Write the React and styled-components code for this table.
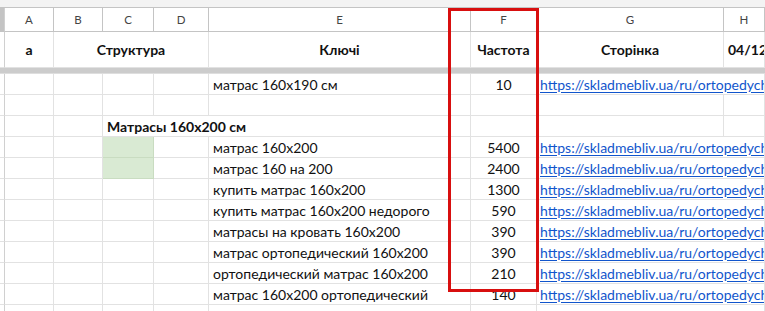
import React from 'react';
import styled, { createGlobalStyle } from 'styled-components';

const GlobalStyle = createGlobalStyle`
  html, body {
    margin: 0;
    padding: 0;
    background: #ffffff;
    overflow: hidden;
  }
  body {
    font-family: Lato, 'Noto Sans', sans-serif;
  }
`;

const COLS = '5px 49px 49px 51px 55px 262px 66px 187px 1fr';
const LINK =
  'https://skladmebliv.ua/ru/ortopedychni-matratsy/matratsy-160x200';

const Sheet = styled.div`
  position: relative;
  width: 765px;
  height: 311px;
  overflow: hidden;
  background: #ffffff;
`;

const TopStrip = styled.div`
  height: 7px;
  background: #f3f3f3;
  border-bottom: 1px solid #c4c4c4;
`;

const Row = styled.div`
  display: grid;
  grid-template-columns: ${COLS};
  height: ${({ $height }) => $height || 21}px;
`;

const Cell = styled.div`
  box-sizing: border-box;
  min-width: 0;
  display: flex;
  align-items: center;
  justify-content: ${({ $align }) =>
    $align === 'center' ? 'center' : $align === 'right' ? 'flex-end' : 'flex-start'};
  padding: 0 4px;
  grid-column: ${({ $span }) => ($span ? `span ${$span}` : 'auto')};
  border-right: 1px solid ${({ $line }) => $line || '#e2e2e2'};
  border-bottom: 1px solid ${({ $line }) => $line || '#e2e2e2'};
  background: ${({ $bg }) => $bg || 'transparent'};
  font-size: 14px;
  font-weight: ${({ $bold }) => ($bold ? 700 : 400)};
  color: #111111;
  white-space: nowrap;
  overflow: ${({ $spill }) => ($spill ? 'visible' : 'hidden')};
`;

const RowHead = styled.div`
  box-sizing: border-box;
  background: ${({ $filled }) => ($filled ? '#c4c4c4' : 'transparent')};
  border-right: 1px solid #d0d0d0;
  border-bottom: 1px solid ${({ $filled }) => ($filled ? '#c4c4c4' : '#e2e2e2')};
`;

const Letter = styled(Cell)`
  font-size: 11.5px;
  color: #444444;
  border-color: #c4c4c4;
  padding: 0;
`;

const FreezeBar = styled.div`
  height: 5px;
  background: #cccccc;
  border-bottom: 1px solid #dedede;
`;

const Link = styled.a`
  color: #1155cc;
  text-decoration: underline;
  text-underline-offset: 2px;
`;

const Highlight = styled.div`
  position: absolute;
  left: 448px;
  top: 8px;
  width: 91px;
  height: 284px;
  box-sizing: border-box;
  border: 3px solid #d80f0f;
  pointer-events: none;
`;

const letters = ['A', 'B', 'C', 'D', 'E', 'F', 'G', 'H'];

const rows = [
  { key: 'матрас 160x190 см', freq: '10', link: true },
  {},
  { group: 'Матрасы 160x200 см' },
  { key: 'матрас 160x200', freq: '5400', link: true, green: true },
  { key: 'матрас 160 на 200', freq: '2400', link: true, green: true },
  { key: 'купить матрас 160x200', freq: '1300', link: true },
  { key: 'купить матрас 160x200 недорого', freq: '590', link: true },
  { key: 'матрасы на кровать 160x200', freq: '390', link: true },
  { key: 'матрас ортопедический 160x200', freq: '390', link: true },
  { key: 'ортопедический матрас 160x200', freq: '210', link: true },
  { key: 'матрас 160x200 ортопедический', freq: '140', link: true },
  { key: 'матрасы 160x200 цена', freq: '110', link: true },
];

const DataRow = ({ row }) => {
  if (row.group) {
    return (
      <Row>
        <RowHead />
        <Cell />
        <Cell />
        <Cell $span={3} $bold $spill>
          {row.group}
        </Cell>
        <Cell />
        <Cell />
        <Cell />
      </Row>
    );
  }
  return (
    <Row>
      <RowHead />
      <Cell />
      <Cell />
      <Cell $bg={row.green ? '#d9ead3' : undefined} $line={row.green ? '#c9dcc1' : undefined} />
      <Cell />
      <Cell>{row.key}</Cell>
      <Cell $align="center">{row.freq}</Cell>
      {row.link ? (
        <Cell $span={2} style={{ paddingLeft: 3 }}>
          <Link href="#">{LINK}</Link>
        </Cell>
      ) : (
        <>
          <Cell />
          <Cell />
        </>
      )}
    </Row>
  );
};

const App = () => {
  return (
    <>
      <GlobalStyle />
      <Sheet>
        <TopStrip />
        <Row $height={24}>
          <RowHead $filled />
          {letters.map((l) => (
            <Letter key={l} $align="center">
              {l}
            </Letter>
          ))}
        </Row>
        <Row $height={36}>
          <RowHead />
          <Cell $align="center" $bold>а</Cell>
          <Cell $align="center" $bold $span={3}>
            Структура
          </Cell>
          <Cell $align="center" $bold>Ключі</Cell>
          <Cell $align="center" $bold>Частота</Cell>
          <Cell $align="center" $bold>Сторінка</Cell>
          <Cell $bold>04/12/2020</Cell>
        </Row>
        <FreezeBar />
        {rows.map((row, i) => (
          <DataRow key={i} row={row} />
        ))}
        <Highlight />
      </Sheet>
    </>
  );
};

export default App;
